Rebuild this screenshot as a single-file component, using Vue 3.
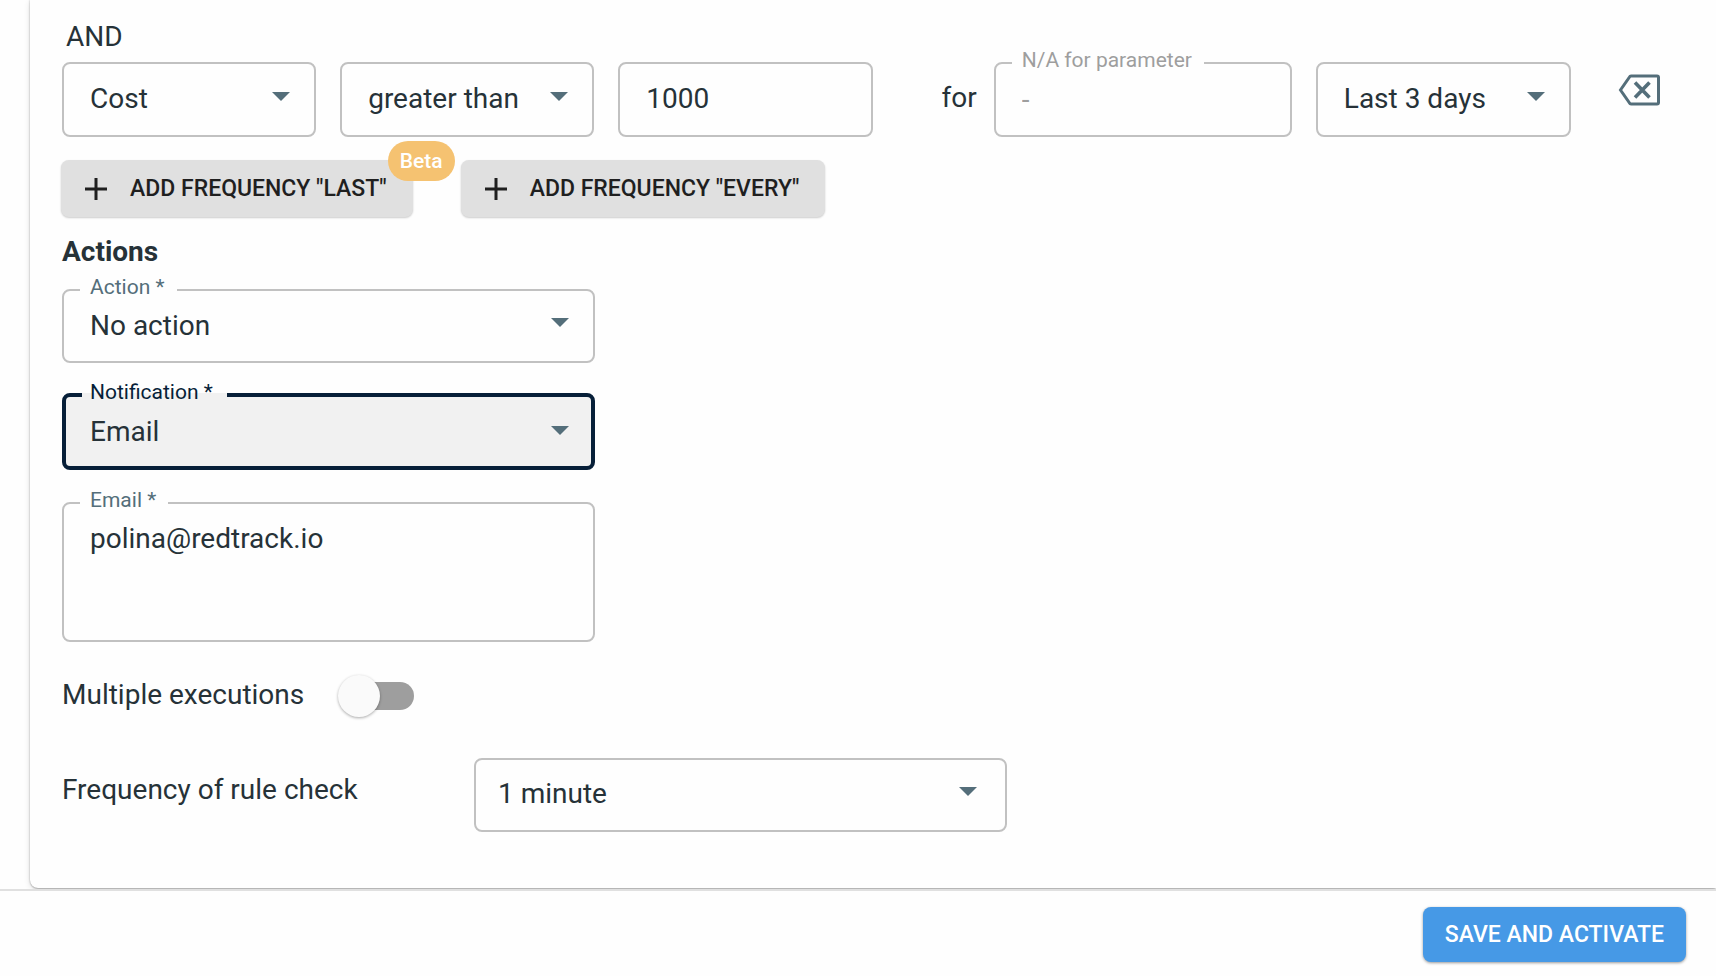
<script setup>
import { ref } from 'vue'

const metric = ref('Cost')
const operator = ref('greater than')
const amount = ref('1000')
const parameter = ref('-')
const period = ref('Last 3 days')
const action = ref('No action')
const notification = ref('Email')
const email = ref('polina@redtrack.io')
const multiple = ref(false)
const frequency = ref('1 minute')
</script>

<template>
  <div class="page">
    <main class="card">
      <p class="joiner">AND</p>
      <div class="condition">
        <div class="field">
          <select v-model="metric" aria-label="Metric"><option>Cost</option></select>
          <svg class="arrow" viewBox="0 0 18 9"><path d="M0 0h18L9 9z" /></svg>
        </div>
        <div class="field">
          <select v-model="operator" aria-label="Operator"><option>greater than</option></select>
          <svg class="arrow" viewBox="0 0 18 9"><path d="M0 0h18L9 9z" /></svg>
        </div>
        <div class="field">
          <input v-model="amount" type="text" aria-label="Value" />
        </div>
        <div class="for-group">
          <span>for</span>
          <fieldset class="field labelled disabled">
            <legend><label for="parameter">N/A for parameter</label></legend>
            <input id="parameter" v-model="parameter" type="text" disabled />
          </fieldset>
        </div>
        <div class="field">
          <select v-model="period" aria-label="Period"><option>Last 3 days</option></select>
          <svg class="arrow" viewBox="0 0 18 9"><path d="M0 0h18L9 9z" /></svg>
        </div>
        <button class="remove" type="button" aria-label="Remove condition">
          <svg viewBox="0 0 42 32" fill="none" stroke="currentColor">
            <path d="M13 2H39Q40.500 2 40.500 3.500V28.500Q40.500 30 39 30H13Q12 30 11.500 29L2.500 16 11.500 3Q12 2 13 2Z" stroke-width="3" />
            <path d="M17 8.500 31.500 23.500M31.500 8.500 17 23.500" stroke-width="3.600" />
          </svg>
        </button>
      </div>

      <div class="buttons">
        <button class="add" type="button">
          <svg viewBox="0 0 22 22"><path d="M11 0v22M0 11h22" stroke="currentColor" stroke-width="3" /></svg>
          ADD FREQUENCY "LAST"
          <span class="beta">Beta</span>
        </button>
        <button class="add" type="button">
          <svg viewBox="0 0 22 22"><path d="M11 0v22M0 11h22" stroke="currentColor" stroke-width="3" /></svg>
          ADD FREQUENCY "EVERY"
        </button>
      </div>

      <h2>Actions</h2>
      <div class="stack">
        <fieldset class="field labelled">
          <legend><label for="action">Action *</label></legend>
          <select id="action" v-model="action"><option>No action</option></select>
          <svg class="arrow" viewBox="0 0 18 9"><path d="M0 0h18L9 9z" /></svg>
        </fieldset>
        <fieldset class="field labelled focused">
          <legend><label for="notification">Notification *</label></legend>
          <select id="notification" v-model="notification"><option>Email</option></select>
          <svg class="arrow" viewBox="0 0 18 9"><path d="M0 0h18L9 9z" /></svg>
        </fieldset>
        <fieldset class="field labelled area">
          <legend><label for="email">Email *</label></legend>
          <textarea id="email" v-model="email" spellcheck="false"></textarea>
        </fieldset>
      </div>

      <div class="switch-row">
        <label for="multiple">Multiple executions</label>
        <input id="multiple" v-model="multiple" class="switch" type="checkbox" role="switch" />
      </div>

      <div class="frequency">
        <label for="frequency">Frequency of rule check</label>
        <div class="field">
          <select id="frequency" v-model="frequency"><option>1 minute</option></select>
          <svg class="arrow" viewBox="0 0 18 9"><path d="M0 0h18L9 9z" /></svg>
        </div>
      </div>
    </main>
    <footer>
      <button class="save" type="button">SAVE AND ACTIVATE</button>
    </footer>
  </div>
</template>

<style>
body {
  margin: 0;
  background: #fefefe;
}
</style>

<style scoped>
* {
  box-sizing: border-box;
}
.page {
  display: flex;
  flex-direction: column;
  min-height: 100vh;
  overflow: hidden;
  font: 400 28px/32px Roboto, "Liberation Sans", sans-serif;
  color: #263238;
  background: #fefefe;
}
button, input, select, textarea {
  font: inherit;
  color: inherit;
}
p, h2 {
  margin: 0;
}
.card {
  flex: 1;
  margin: 0 0 1px 30px;
  padding: 21px 56px 56px 32px;
  background: #fefefe;
  border-radius: 0 0 0 8px;
  box-shadow: 0 2px 2px -1px #00000033, 0 0 2px #00000055, 0 2px 6px #0000001f;
}
.joiner {
  padding-left: 4px;
  margin-bottom: 9px;
}
.condition {
  display: grid;
  grid-template-columns: 254fr 254fr 254fr 395fr 255fr 65px;
  column-gap: 24px;
  align-items: end;
}
.field {
  position: relative;
  display: flex;
  min-width: 0;
  height: 75px;
  margin: 0;
  padding: 0;
  border: 2px solid #c1c1c1;
  border-radius: 8px;
}
.field select, .field input, .field textarea {
  appearance: none;
  display: block;
  width: 100%;
  min-width: 0;
  height: 100%;
  margin: 0;
  padding: 0 26px 2px;
  border: 0;
  outline: 0;
  background: transparent;
  resize: none;
}
.arrow {
  position: absolute;
  right: 24px;
  bottom: 34px;
  width: 18px;
  height: 9px;
  fill: #546e7a;
  pointer-events: none;
}
.labelled {
  display: block;
  height: 87px;
  margin-top: -12px;
}
.labelled legend {
  height: 26px;
  margin-left: 16px;
  padding: 0 12px 0 10px;
  font-size: 21px;
  line-height: 20px;
  color: #546e7a;
}
.labelled legend label {
  display: block;
}
.labelled input, .labelled select {
  height: 48px;
}
.disabled {
  flex: 1;
  color: #9e9e9e;
}
.disabled legend {
  color: #9e9e9e;
}
.for-group {
  display: flex;
  align-items: center;
  gap: 17px;
  padding-left: 45px;
}
.for-group span {
  padding-bottom: 4px;
}
.remove {
  align-self: start;
  display: flex;
  justify-content: flex-end;
  margin-top: 12px;
  padding: 0;
  border: 0;
  background: none;
  color: #546e7a;
}
.remove svg {
  width: 42px;
  height: 32px;
}
.buttons {
  display: flex;
  gap: 48px;
  margin: 23px 0 0 -1px;
}
.add {
  position: relative;
  display: flex;
  align-items: center;
  gap: 23px;
  height: 57px;
  padding: 0 26px 0 24px;
  border: 0;
  border-radius: 8px;
  background: #e0e0e0;
  color: #1f1f1f;
  font-size: 23px;
  font-weight: 500;
  box-shadow: 0 1px 2px #00000033;
}
.add svg {
  width: 22px;
  height: 22px;
}
.beta {
  position: absolute;
  top: -19px;
  right: -42px;
  padding: 4px 12px;
  border-radius: 20px;
  background: #f5c271;
  color: #fff;
  font-size: 21px;
}
h2 {
  margin-top: 19px;
  font-size: 28px;
  font-weight: 700;
}
.stack {
  display: grid;
  gap: 32px;
  max-width: 533px;
  margin-top: 21px;
}
.stack .field {
  height: 86px;
}
.stack .focused {
  height: 88px;
  margin-top: -13px;
  border: 4px solid #071f38;
  background: #f1f1f1;
}
.focused legend {
  padding: 0 14px 0 8px;
  color: #071f38;
}
.focused select {
  padding: 0 24px;
}
.focused .arrow {
  right: 22px;
  bottom: 31px;
}
.stack .area {
  height: 152px;
}
.area textarea {
  height: 120px;
  padding-top: 7px;
}
.switch-row {
  display: flex;
  align-items: center;
  gap: 34px;
  margin-top: 33px;
}
.switch-row label {
  padding-bottom: 2px;
}
.switch {
  appearance: none;
  position: relative;
  width: 76px;
  height: 42px;
  margin: 0;
}
.switch::before {
  content: "";
  position: absolute;
  inset: 7px 0 7px 6px;
  border-radius: 14px;
  background: #9e9e9e;
}
.switch::after {
  content: "";
  position: absolute;
  inset: 0 auto 0 0;
  width: 42px;
  border-radius: 50%;
  background: #fafafa;
  box-shadow: 0 1px 3px #00000055;
}
.switch:checked::after {
  inset: 0 0 0 auto;
}
.frequency {
  display: flex;
  align-items: flex-start;
  margin-top: 41px;
}
.frequency label {
  width: 412px;
  padding-top: 16px;
}
.frequency .field {
  flex: 0 1 533px;
  height: 74px;
}
.frequency select {
  padding: 0 22px 2px;
}
.frequency .arrow {
  right: 28px;
}
footer {
  position: relative;
  display: flex;
  justify-content: flex-end;
  padding: 16px 30px 14px;
  border-top: 2px solid #e0e0e0;
  background: #fefefe;
}
.save {
  height: 55px;
  padding: 0 22px;
  border: 0;
  border-radius: 8px;
  background: #4699e6;
  color: #fff;
  font-size: 23px;
  font-weight: 500;
  box-shadow: 0 1px 3px #00000066;
}
</style>
